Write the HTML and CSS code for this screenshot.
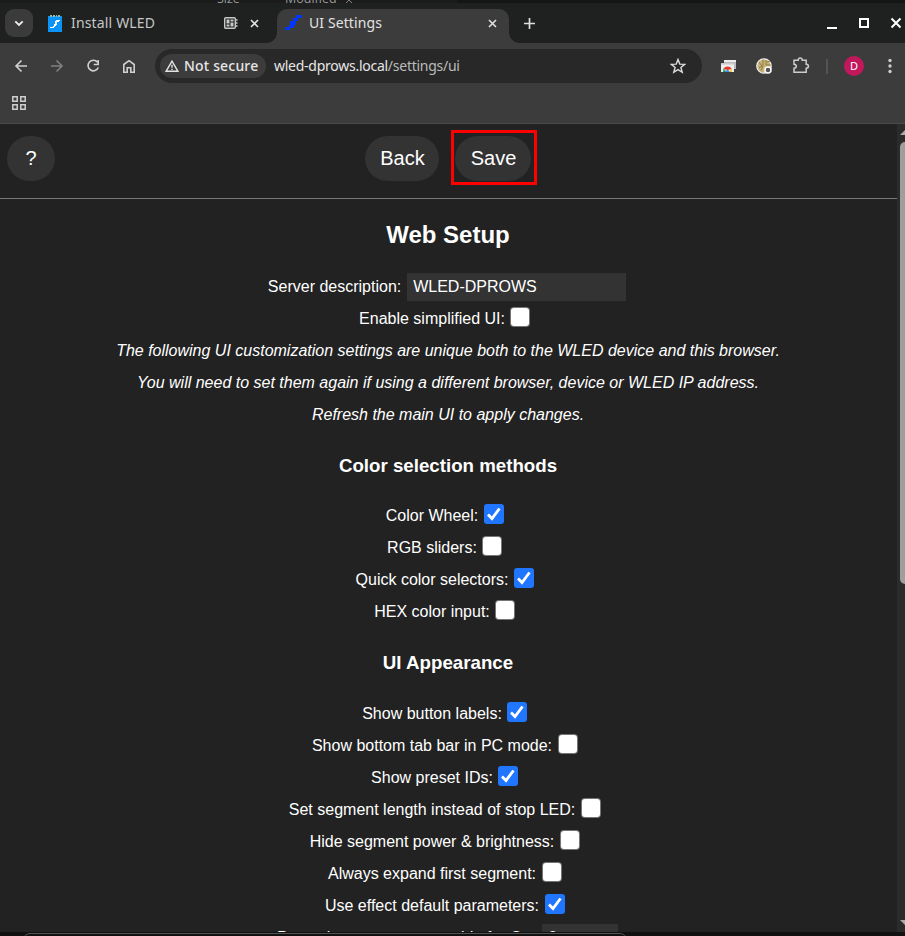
FILE: index.html
```html
<!DOCTYPE html>
<html lang="en">
<head>
<meta charset="utf-8">
<title>UI Settings</title>
<link rel="stylesheet" href="styles.css">
</head>
<body>
<div class="behind"><span class="col-size">Size</span><span class="col-mod">Modified</span><svg class="caret" width="10" height="6" viewBox="0 0 10 6"><path d="M1 5l4-4 4 4"/></svg><i></i></div>
<header class="tabs">
  <span class="tab-search"><svg width="10" height="7" viewBox="0 0 10 7"><path d="M1.3 1.3L5 5l3.700-3.700" fill="none" stroke="#eee" stroke-width="1.900"/></svg></span>
  <div class="tab">
    <svg class="fav" width="14" height="17" viewBox="0 0 14 17" shape-rendering="crispEdges"><path fill="#0a94fa" d="M0 1h14v16H0z"/><path fill="#9eb8a0" d="M2 0h2v2H2zM5 0h2v2H5zM8 0h1v2H8zM10 0h2v2h-2z"/><path fill="#fff" d="M8 5h4v1h-1v1H9v3H8v1H7v1H6v1H2v-1h3v-1h1V9h1V6h1z"/></svg>
    <span class="tab-title install">Install WLED</span>
    <svg class="chip" width="14" height="12" viewBox="0 0 14 12" fill="none" stroke="#c8c8c8"><rect x=".7" y=".7" width="10.600" height="10.600" rx="1" stroke-width="1.400"/><path d="M11 3h2.500M11 6h2.500M11 9h2.500" stroke-width="1.300"/><path fill="#c8c8c8" stroke="none" d="M2.500 2.500h3v4h-3zM6.500 2.500h3v2h-3zM2.500 7.500h3v2h-3zM6.500 5.500h3v4h-3z"/></svg>
    <svg class="x1" width="9" height="9" viewBox="0 0 9 9"><path d="M1 1l7 7M8 1L1 8"/></svg>
  </div>
  <div class="tab active">
    <svg class="fav" width="17" height="16" viewBox="0 0 17 16" shape-rendering="crispEdges"><path fill="#0435fa" d="M11 0h6v3h-4v3h-2v4H9v3H5v2H0v-3h4v-2h1V6h3V3h3z"/></svg>
    <span class="tab-title settings">UI Settings</span>
    <svg class="x2" width="9" height="9" viewBox="0 0 9 9"><path d="M1 1l7 7M8 1L1 8"/></svg>
  </div>
  <svg class="plus" width="11" height="11" viewBox="0 0 11 11"><path d="M5.500 0v11M0 5.500h11" stroke="#ddd" stroke-width="1.700"/></svg>
  <svg class="win" width="74" height="12" viewBox="0 0 74 12" fill="none" stroke="#fff" stroke-width="2"><path d="M0 11h10"/><rect x="33" y="2" width="8" height="8"/><path d="M64.500 1.500l9 9M73.500 1.500l-9 9"/></svg>
</header>
<nav class="toolbar">
  <svg class="nav-icons" width="130" height="20" viewBox="0 0 130 20" fill="none" stroke="#d0d0d0" stroke-width="1.600"><path d="M21 10H10M15.500 4.500L10 10l5.500 5.500"/><path stroke="#808080" d="M45 10h11M50.500 4.500L56 10l-5.500 5.500"/><path d="M91.500 6.200A5.300 5.300 0 1 0 92.300 11.500M92.200 4v4.500h-4.500"/><path d="M117.800 8.500L123 4.700l5.200 3.800v7.700h-3.400v-4.500h-3.600v4.500h-3.400z"/></svg>
  <div class="omnibox">
    <span class="secure"><svg width="14" height="12" viewBox="0 0 14 12" fill="none" stroke="#e3e3e3" stroke-width="1.400"><path d="M7 1.200L1.200 11.200h11.600zM7 4.800v3M7 8.800v1.300"/></svg><b>Not secure</b></span>
    <span class="url">wled-dprows.local<em>/settings/ui</em></span>
    <svg class="star" width="16" height="16" viewBox="0 0 16 16"><path d="M8 1.500l1.800 4.600 4.900.3-3.800 3.100 1.300 4.800L8 11.600l-4.200 2.700 1.300-4.800L1.300 6.400l4.900-.3z" fill="none" stroke="#ddd" stroke-width="1.400"/></svg>
  </div>
  <svg class="ext" width="185" height="24" viewBox="0 0 185 24">
    <path fill="#bbb" d="M4 6h12v9H4z"/><path fill="#eee" d="M4 6h12v2H4zM1 9h13v9H1z"/><path fill="#c9c9c9" d="M1 9h13v1.500H1z"/><path fill="#e33b2e" d="M3.500 15a4.400 3.800 0 0 1 8.200 0L7.500 16z"/><path fill="#20a45a" d="M3.500 14.200L6.500 18H3z"/><path fill="#fcc934" d="M11.700 14.200L9 18h3z"/><path d="M5.500 18a2 2 0 0 1 4 0z" fill="#4285f4"/>
    <circle cx="44" cy="12" r="7.200" fill="#c9b476" stroke="#eee" stroke-width="1.300"/><path d="M39 8l3 4-3 2M43 5.500v6l-2 5M46 6v5h4.500M47 8l3-1" fill="none" stroke="#8a7a48"/><circle cx="48" cy="16" r="3" fill="#555" stroke="#fff" stroke-width="1.500"/>
    <path d="M74 6.200h4.200Q78.200 4 80.200 4t2 2.200h4v4q2.300.2 2.300 2t-2.300 2v4H74v-4q2.300-.2 2.300-2t-2.300-2z" fill="none" stroke="#ccc" stroke-width="1.500"/>
    <path d="M107 5v15" stroke="#5c5c5c" stroke-width="1.500"/>
    <circle cx="134" cy="12" r="10" fill="#c2185b"/><text x="134" y="16" text-anchor="middle" class="avatar">D</text>
    <g fill="#ccc"><circle cx="170" cy="6.500" r="1.700"/><circle cx="170" cy="12" r="1.700"/><circle cx="170" cy="17.500" r="1.700"/></g>
  </svg>
</nav>
<div class="bookmarks"><svg width="14" height="14" viewBox="0 0 14 14" fill="none" stroke="#d0d0d0" stroke-width="1.500"><path d="M.8.8h4.400v4.400H.8zM8.800.8h4.400v4.400H8.800zM.8 8.800h4.400v4.400H.8zM8.800 8.800h4.400v4.400H8.800z"/></svg></div>
<div class="viewport">
  <main>
    <div class="actions"><button class="help">?</button><button class="back">Back</button><span class="mark"><button class="save">Save</button></span></div>
    <h2>Web Setup</h2>
    <div class="row server">Server description: <span class="field">WLED-DPROWS</span></div>
    <div class="row">Enable simplified UI:<span class="box"></span></div>
    <div class="row note">The following UI customization settings are unique both to the WLED device and this browser.</div>
    <div class="row note">You will need to set them again if using a different browser, device or WLED IP address.</div>
    <div class="row note">Refresh the main UI to apply changes.</div>
    <h3>Color selection methods</h3>
    <div class="row">Color Wheel:<span class="box on"><svg viewBox="0 0 20 20"><path d="M4 10.500l4 4L15.500 4.500"/></svg></span></div>
    <div class="row">RGB sliders:<span class="box"></span></div>
    <div class="row">Quick color selectors:<span class="box on"><svg viewBox="0 0 20 20"><path d="M4 10.500l4 4L15.500 4.500"/></svg></span></div>
    <div class="row">HEX color input:<span class="box"></span></div>
    <h3 class="appearance">UI Appearance</h3>
    <div class="row">Show button labels:<span class="box on"><svg viewBox="0 0 20 20"><path d="M4 10.500l4 4L15.500 4.500"/></svg></span></div>
    <div class="row">Show bottom tab bar in PC mode:<span class="box"></span></div>
    <div class="row">Show preset IDs:<span class="box on"><svg viewBox="0 0 20 20"><path d="M4 10.500l4 4L15.500 4.500"/></svg></span></div>
    <div class="row">Set segment length instead of stop LED:<span class="box"></span></div>
    <div class="row">Hide segment power &amp; brightness:<span class="box"></span></div>
    <div class="row">Always expand first segment:<span class="box"></span></div>
    <div class="row">Use effect default parameters:<span class="box on"><svg viewBox="0 0 20 20"><path d="M4 10.500l4 4L15.500 4.500"/></svg></span></div>
    <div class="row last">Power button preset override for On: <span class="field small">0</span></div>
  </main>
  <aside><svg width="8" height="6" viewBox="0 0 8 6"><path d="M3 6l6-6v6z"/></svg><i></i><svg class="down" width="8" height="6" viewBox="0 0 8 6"><path d="M3 0h6v6z"/></svg></aside>
</div>
<footer><i></i></footer>
</body>
</html>
```
FILE: styles.css
```css
* { box-sizing: border-box; }
body { margin: 0; width: 905px; height: 936px; overflow: hidden; background: #222; color: #fff; font: 16px "Liberation Sans", sans-serif; display: flex; flex-direction: column; }
svg { display: block; flex: none; }
.behind { height: 3px; flex: none; background: #1b1b1b; overflow: hidden; display: flex; align-items: flex-end; font: 12.500px/9px "Open Sans", sans-serif; color: #999; }
.col-size { margin-left: 217px; width: 68px; }
.col-mod { width: 59px; }
.caret { fill: none; stroke: #858585; margin-bottom: -2px; }
.behind i { width: 448px; margin-left: auto; height: 3px; background: #151515; }
.tabs { height: 40px; flex: none; background: #1f2120; display: flex; align-items: flex-start; }
.tab-search { width: 28px; height: 28px; margin: 6px 0 0 5px; border-radius: 9px; background: #3b3b3b; display: flex; align-items: center; justify-content: center; }
.tab { display: flex; width: 244px; height: 40px; padding-left: 15px; }
.tab .fav { margin-top: 12px; }
.tab-title { font: 14px/19px "Noto Sans", sans-serif; margin-top: 10px; color: #c7c7c7; white-space: nowrap; }
.install { margin-left: 9px; width: 153px; letter-spacing: .16px; }
.chip { margin-top: 14px; }
.x1 { margin: 16px 0 0 12px; }
.x1 path, .x2 path { stroke: #ddd; stroke-width: 1.7; }
.tab.active { position: relative; width: 232px; height: 34px; margin-top: 6px; background: #3c3c3c; border-radius: 10px 10px 0 0; padding-left: 8px; }
.tab.active::before, .tab.active::after { content: ""; position: absolute; bottom: 0; width: 10px; height: 10px; }
.tab.active::before { left: -10px; background: radial-gradient(circle at 0 0, transparent 9.5px, #3c3c3c 10px); }
.tab.active::after { right: -10px; background: radial-gradient(circle at 100% 0, transparent 9.5px, #3c3c3c 10px); }
.active .fav { margin-top: 6px; }
.settings { margin: 4px 0 0 7px; width: 179px; color: #e3e3e3; letter-spacing: .1px; }
.x2 { margin-top: 10px; }
.plus { margin: 15px 0 0 15px; }
.win { margin: 14px 4px 0 auto; }
.toolbar { height: 46px; flex: none; background: #3c3c3c; display: flex; align-items: center; padding-left: 5px; }
.nav-icons { margin-left: 1px; }
.omnibox { width: 547px; height: 34px; margin-left: 19px; border-radius: 17px; background: #282828; display: flex; align-items: center; padding-left: 5px; }
.secure { width: 106px; height: 24px; border-radius: 12px; background: #3c3c3c; display: flex; align-items: center; padding-left: 5px; gap: 5px; }
.secure b, .url { font: 14px/20px "Noto Sans", sans-serif; white-space: nowrap; color: #e6e6e6; }
.secure b { font-weight: 500; letter-spacing: .18px; }
.url { margin-left: 8px; letter-spacing: -.26px; }
.url em { font-style: normal; color: #bbb; }
.star { margin: 0 16px 0 auto; }
.ext { margin-left: 18px; }
.avatar { font: 11px "Noto Sans", sans-serif; fill: #fff; }
.bookmarks { height: 35px; flex: none; background: #3c3c3c; border-bottom: 1px solid #4a4a4a; padding: 7px 0 0 12px; }
.viewport { height: 808px; flex: none; display: flex; overflow: hidden; }
main { width: 897px; text-align: center; }
.actions { height: 75px; border-bottom: 1px solid #777; display: flex; padding: 12px 0 0 7px; }
button { border: 0; background: #333; color: #fff; font: 20px "Liberation Sans", sans-serif; height: 45px; border-radius: 24px; padding: 0; }
.help { width: 48px; }
.back { width: 74px; margin-left: 310px; padding-left: 1px; }
.mark { width: 86px; height: 55px; margin: -6px 0 0 11.500px; border: 3px solid #f00; padding: 3px 0 0 1.500px; text-align: left; }
.save { width: 76px; padding-left: 1px; }
h2, h3 { padding-right: 1px; }
h2 { font-size: 24px; line-height: 28px; margin: 22px 0 22px; }
h3 { font-size: 18.72px; line-height: 22px; margin: 24px 0 23px; }
h3.appearance { margin: 24px 0 24px; }
.row { height: 32px; display: flex; align-items: center; justify-content: center; white-space: pre; padding-right: 1px; }
.row.server { padding-right: 3px; }
.row.last { padding-right: 2px; }
.note { font-style: italic; }
.field { width: 219px; height: 28px; background: #333; padding-left: 6px; text-align: left; line-height: 27px; margin-left: 2px; }
.server .field { margin-left: 1.500px; }
.box { width: 18px; height: 18px; margin: -4px 7.500px 0 6.500px; border-radius: 3px; background: #fff; box-shadow: 0 0 0 1px #767676; }
.box.on { width: 20px; height: 20px; margin: -4px 6.500px 0 5.500px; background: #2176ff; box-shadow: none; }
.box path { fill: none; stroke: #fff; stroke-width: 2.8; }
.field.small { width: 76px; }
aside { width: 8px; background: #2b2b2b; display: flex; flex-direction: column; padding-top: 5px; }
aside path { fill: #aaa; }
aside i { height: 442px; margin: 7px 0 0 3px; background: #9e9e9e; border-radius: 5px 0 0 5px; }
.down { margin: auto 0 6px; }
footer { height: 4px; flex: none; background: #111; padding: 1px 0 0 23px; overflow: hidden; }
footer i { display: block; width: 604px; height: 20px; border: 1px solid #555; border-radius: 7px; }
```
